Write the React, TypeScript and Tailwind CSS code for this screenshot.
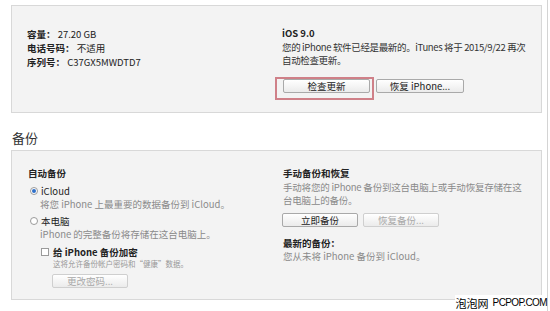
function Btn({ label, w, disabled }: { label: string; w: string; disabled?: boolean }) {
  return (
    <div
      className={`${w} h-[14px] rounded-[2px] border text-center leading-[12px] bg-gradient-to-b from-white to-[#ebebeb] ${
        disabled ? 'border-[#cfcfcf] text-[#a8a8a8]' : 'border-[#a9a9a9] text-[#222]'
      }`}
    >
      {label}
    </div>
  )
}

function Radio({ checked }: { checked?: boolean }) {
  return (
    <span className="flex h-[8px] w-[8px] items-center justify-center rounded-full border border-[#9a9a9a] bg-white">
      {checked && <span className="h-[4px] w-[4px] rounded-full bg-[#2f6fc9]" />}
    </span>
  )
}

export default function App() {
  return (
    <div className="flex h-[311px] w-[550px] overflow-hidden whitespace-nowrap bg-white font-['Noto_Sans_CJK_SC',sans-serif] text-[9.5px] leading-[14px] text-[#222]">
      <div className="relative w-[547px]">
        {/* Summary */}
        <div className="pl-[11px] pt-[5px] pr-[5px]">
          <div className="grid h-[108px] grid-cols-[255px_1fr] border border-[#d8d8d8] bg-[#f3f3f3]">
            <div className="pl-[15px] pt-[21px]">
              <div>
                <b>容量：</b> 27.20 GB
              </div>
              <div>
                <b>电话号码：</b> 不适用
              </div>
              <div>
                <b>序列号：</b> C37GX5MWDTD7
              </div>
            </div>
            <div className="pl-[15px] pt-[20px]">
              <div className="font-bold">iOS 9.0</div>
              <div className="mt-px leading-[13px] tracking-[-0.35px] text-[#333]">
                <div>您的 iPhone 软件已经是最新的。iTunes 将于 2015/9/22 再次</div>
                <div>自动检查更新。</div>
              </div>
              <div className="ml-px mt-[12px] flex gap-[6px]">
                <Btn label="检查更新" w="w-[87px]" />
                <Btn label="恢复 iPhone..." w="w-[88px]" />
              </div>
            </div>
          </div>
        </div>

        {/* Backup */}
        <div className="mt-[17px] pl-[12px] text-[13px] leading-[16px] text-[#333]">备份</div>
        <div className="mt-[4px] pl-[11px] pr-[5px]">
          <div className="grid h-[150px] grid-cols-[255px_1fr] border border-[#d8d8d8] bg-[#f3f3f3]">
            <div className="pl-[16px] pt-[15px]">
              <div className="font-bold">自动备份</div>
              <div className="ml-[2px] mt-[4px] flex items-center gap-[3px]">
                <Radio checked />
                <span>iCloud</span>
              </div>
              <div className="ml-[12px] leading-[13px] text-[#8a8a8a]">将您 iPhone 上最重要的数据备份到 iCloud。</div>
              <div className="ml-[2px] mt-[3px] flex items-center gap-[3px]">
                <Radio />
                <span>本电脑</span>
              </div>
              <div className="ml-[12px] leading-[13px] text-[#8a8a8a]">iPhone 的完整备份将存储在这台电脑上。</div>
              <div className="ml-[13px] mt-[4px] flex items-center gap-[4px]">
                <span className="h-[8px] w-[8px] border border-[#9a9a9a] bg-white" />
                <b>给 iPhone 备份加密</b>
              </div>
              <div className="ml-[25px] text-[7.5px] leading-[10px] text-[#999]">这将允许备份帐户密码和“健康”数据。</div>
              <div className="ml-[24px] mt-[5px]">
                <Btn label="更改密码..." w="w-[76px]" disabled />
              </div>
            </div>
            <div className="pl-[16px] pt-[15px]">
              <div className="font-bold">手动备份和恢复</div>
              <div className="mt-[1px] leading-[13px] tracking-[-0.2px] text-[#8a8a8a]">
                <div>手动将您的 iPhone 备份到这台电脑上或手动恢复存储在这</div>
                <div>台电脑上的备份。</div>
              </div>
              <div className="-ml-px mt-[6px] flex gap-[5px]">
                <Btn label="立即备份" w="w-[76px]" />
                <Btn label="恢复备份..." w="w-[76px]" disabled />
              </div>
              <div className="mt-[10px] font-bold leading-[13px]">最新的备份：</div>
              <div className="leading-[13px] text-[#8a8a8a]">您从未将 iPhone 备份到 iCloud。</div>
            </div>
          </div>
        </div>

        {/* annotation */}
        <div className="absolute left-[275px] top-[77px] h-[23px] w-[99px] border-2 border-[#cf8088]" />

        {/* watermark */}
        <div className="absolute left-[455px] top-[295px] flex h-[16px] w-[92px] items-center justify-end gap-[4px] bg-white text-black">
          <span className="text-[11px] leading-[12px]">泡泡网</span>
          <span className="font-['Liberation_Sans',sans-serif] text-[10px] leading-[12px] tracking-[-0.6px]">PCPOP.COM</span>
        </div>
      </div>
      <div className="w-px bg-[#d4d4d4]" />
      <div className="w-[2px]" />
    </div>
  )
}
